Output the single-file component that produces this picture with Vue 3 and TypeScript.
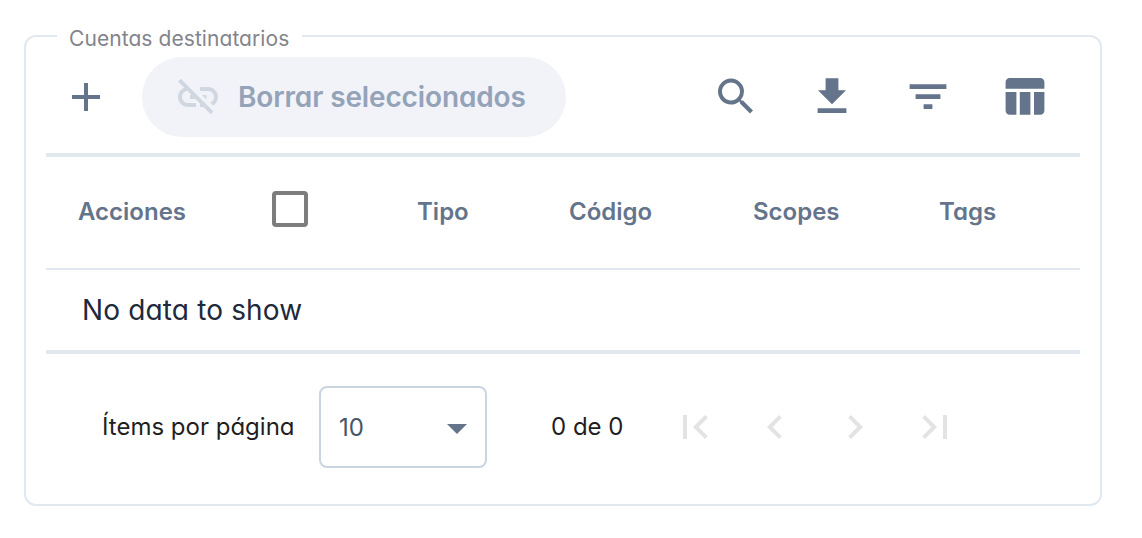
<script setup lang="ts">
interface Column { label: string; cls: string }

const columns: Column[] = [
  { label: 'Tipo', cls: 'tipo' },
  { label: 'Código', cls: 'codigo' },
  { label: 'Scopes', cls: 'scopes' },
  { label: 'Tags', cls: 'tags' },
]

const tools: { name: string; d: string }[] = [
  { name: 'Buscar', d: 'M15.5 14.3h-.79l-.28-.27A6.47 6.47 0 0 0 16 9.8 6.5 6.5 0 1 0 9.5 16.3c1.61 0 3.09-.59 4.23-1.57l.27.28v.79l5 4.99L20.49 19.3l-4.99-5zm-6 0C7.01 14.3 5 12.29 5 9.8S7.01 5.3 9.5 5.3 14 7.31 14 9.8 11.99 14.3 9.5 14.3z' },
  { name: 'Descargar', d: 'M19 9.1h-3.8V3.1H8.8v6H5l7 7 7-7zM4.8 18.1v2.4h14.4v-2.4z' },
  { name: 'Filtrar', d: 'M9.8 18.5h4.4v-2.4H9.8zM2.8 6.1v2.4h18.4V6.1zM5.8 13.5h12.4v-2.4H5.8z' },
  { name: 'Columnas', d: 'M9.9 10h5.3v11.4H9.9V10zM17 21.4h3.2c1.1 0 2-.9 2-2V10H17v11.4zM20.2 3H4.8c-1.1 0-2 .9-2 2v3.4h19.4V5c0-1.1-.9-2-2-2zM2.8 19.4c0 1.1.9 2 2 2h3.4V10H2.8v9.4z' },
]

const pages: { name: string; d: string }[] = [
  { name: 'Primera', d: 'M18.41 16.59L13.82 12l4.59-4.59L17 6l-6 6 6 6zM6 6h2v12H6z' },
  { name: 'Anterior', d: 'M15.41 7.41L14 6l-6 6 6 6 1.41-1.41L10.83 12z' },
  { name: 'Siguiente', d: 'M10 6L8.59 7.41 13.17 12l-4.58 4.59L10 18l6-6z' },
  { name: 'Última', d: 'M5.59 7.41L10.18 12l-4.59 4.59L7 18l6-6-6-6zM16 6h2v12h-2z' },
]
</script>

<template>
  <fieldset class="panel">
    <legend><span>Cuentas destinatarios</span></legend>
    <div class="toolbar">
      <button class="icon add" aria-label="Agregar">
        <svg viewBox="0 0 24 24"><path d="M19 13h-6v6h-2v-6H5v-2h6V5h2v6h6z" /></svg>
      </button>
      <button class="unlink" disabled>
        <svg viewBox="0 0 24 24"><path d="M14 11h2.2v2.2zM17 7h-4v2h4c1.65 0 3 1.35 3 3 0 1.27-.77 2.37-1.87 2.84l1.4 1.4C21.05 15.36 22 13.79 22 12c0-2.76-2.24-5-5-5zM2 4.27l3.11 3.11C3.29 8.12 2 9.91 2 12c0 2.76 2.24 5 5 5h4v-2H7c-1.65 0-3-1.35-3-3 0-1.59 1.21-2.9 2.76-3.07L8.73 11H8v2h2.73L13 15.27V17h1.73l3.6 3.6 1.41-1.41L3.41 2.86 2 4.27z" /></svg>
        <span>Borrar seleccionados</span>
      </button>
      <div class="tools">
        <button v-for="t in tools" :key="t.name" class="icon" :aria-label="t.name">
          <svg viewBox="0 0 24 24"><path :d="t.d" /></svg>
        </button>
      </div>
    </div>
    <div class="head">
      <span class="acciones">Acciones</span>
      <span class="check" role="checkbox" aria-checked="false"></span>
      <span v-for="c in columns" :key="c.label" :class="c.cls">{{ c.label }}</span>
    </div>
    <div class="empty"><span>No data to show</span></div>
    <div class="pager">
      <span class="items">Ítems por página</span>
      <div class="select">
        <span>10</span>
        <svg viewBox="0 0 20 10"><path d="M0 0h20L10 10z" /></svg>
      </div>
      <span class="range">0 de 0</span>
      <div class="pages">
        <button v-for="p in pages" :key="p.name" class="icon" :aria-label="p.name" disabled>
          <svg viewBox="0 0 24 24"><path :d="p.d" /></svg>
        </button>
      </div>
    </div>
  </fieldset>
</template>

<style>
body {
  background: #fff;
}
</style>

<style scoped>
.panel {
  box-sizing: border-box;
  width: 1078px;
  height: 480px;
  margin: 26px 0 0 24px;
  padding: 0 20px;
  border: 2px solid #e2e8f0;
  border-radius: 12px;
  min-width: 0;
  font-family: Inter, 'Liberation Sans', sans-serif;
  font-feature-settings: 'cv11';
  white-space: nowrap;
}
legend {
  box-sizing: border-box;
  width: 245px;
  height: 20px;
  margin-left: 11px;
  padding: 0 0 0 12px;
  font-size: 21px;
  line-height: 25px;
  letter-spacing: 0.07px;
  color: #83848c;
}
button {
  margin: 0;
  padding: 0;
  border: 0;
  background: none;
  color: inherit;
  font: inherit;
  font-feature-settings: inherit;
}
svg {
  display: block;
  flex: none;
  fill: currentColor;
}
.icon svg {
  width: 48px;
  height: 48px;
}
.toolbar {
  box-sizing: border-box;
  display: flex;
  align-items: center;
  height: 108px;
  margin-top: 3px;
  padding: 0 32px 8px 16px;
  border-bottom: 4px solid #e2e8f0;
  color: #64748b;
}
.unlink {
  display: flex;
  align-items: center;
  width: 424px;
  height: 80px;
  margin-left: 32px;
  padding-left: 32px;
  border-radius: 40px;
  background: #f1f3f8;
  color: #94a3b8;
  font-size: 28px;
  font-weight: 600;
  letter-spacing: -0.13px;
}
.unlink svg {
  width: 48px;
  height: 48px;
  color: #d0d7e1;
}
.unlink span {
  margin-left: 16px;
}
.tools {
  display: flex;
  gap: 48px;
  margin: -2px 0 0 auto;
}
.head {
  box-sizing: border-box;
  display: grid;
  grid-template-columns: 194px 145px 152px 184px 186px 1fr;
  align-items: center;
  height: 113px;
  padding: 0 0 3px 32px;
  border-bottom: 2px solid #e2e8f0;
  color: #64748b;
  font-size: 24px;
  font-weight: 600;
}
.check {
  box-sizing: border-box;
  width: 36px;
  height: 36px;
  margin-top: -5px;
  border: 4px solid #7d7d7d;
  border-radius: 4px;
}
.empty {
  box-sizing: border-box;
  display: flex;
  align-items: center;
  height: 84px;
  padding-left: 36px;
  border-bottom: 4px solid #e2e8f0;
  color: #1e293b;
  font-size: 28px;
  letter-spacing: 0.15px;
}
.pager {
  display: flex;
  align-items: center;
  height: 146px;
  padding-left: 56px;
  color: #1f1f1f;
  font-size: 24px;
}
.items {
  width: 217px;
  padding-bottom: 2px;
}
.select {
  box-sizing: border-box;
  display: flex;
  align-items: center;
  justify-content: space-between;
  width: 168px;
  height: 82px;
  padding: 0 18px;
  border: 2px solid #cbd5e1;
  border-radius: 8px;
  color: #475569;
}
.select svg {
  width: 20px;
  height: 10px;
  margin-top: 3px;
  color: #64748b;
}
.range {
  width: 120px;
  margin-left: 64px;
  padding-bottom: 2px;
}
.pages {
  display: flex;
  gap: 32px;
  color: #e3e3e3;
}
</style>
